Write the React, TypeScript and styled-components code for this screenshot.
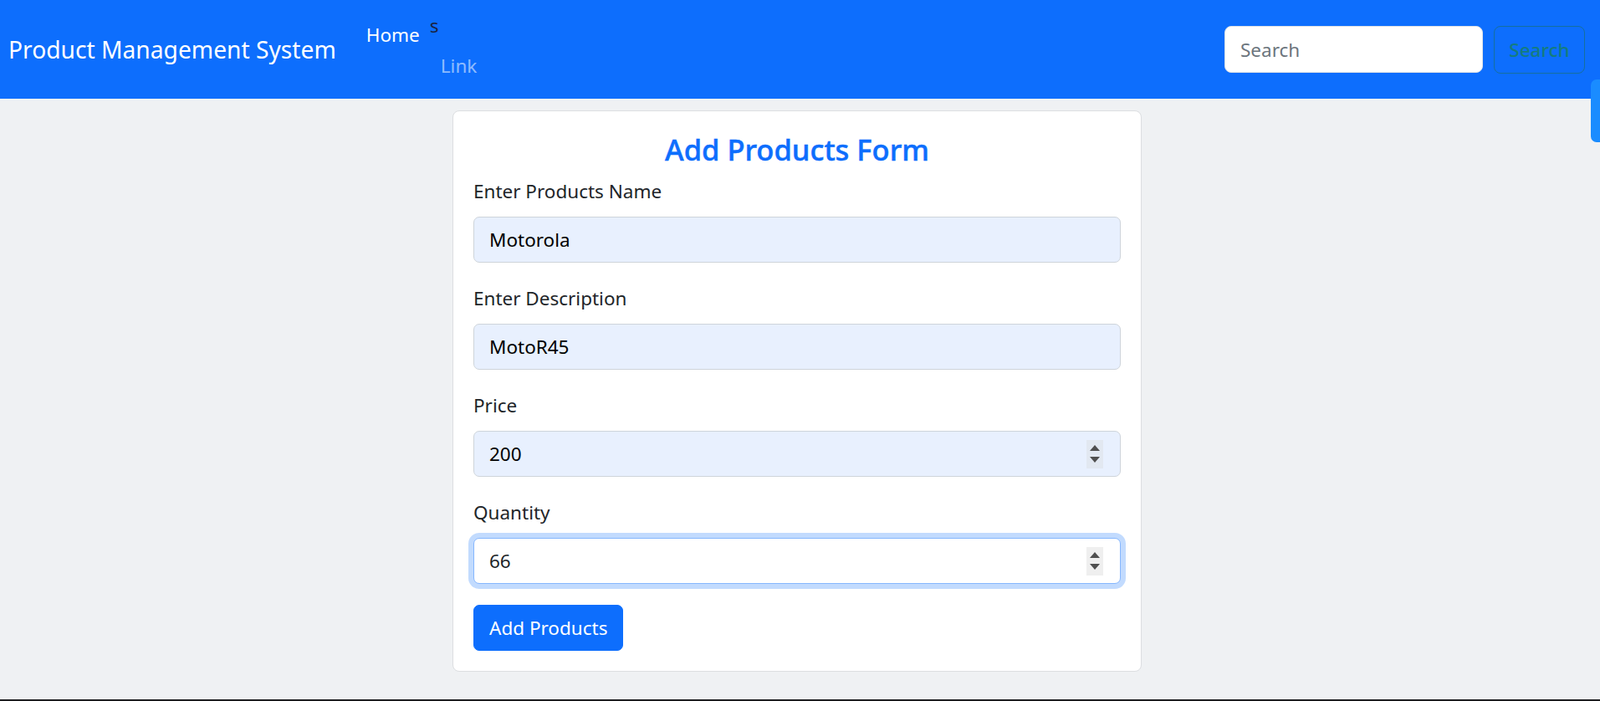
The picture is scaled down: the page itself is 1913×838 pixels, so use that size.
import React from "react";
import styled, { createGlobalStyle } from "styled-components";

const GlobalStyle = createGlobalStyle`
  html, body {
    margin: 0;
    padding: 0;
    background: #eff1f3;
    font-family: "Noto Sans", "Open Sans", sans-serif;
    color: #212529;
  }
  * { box-sizing: border-box; }
`;

const Page = styled.div`
  min-height: 838px;
  display: flex;
  flex-direction: column;
`;

const Navbar = styled.nav`
  height: 118px;
  background: #0d6efd;
  display: flex;
  align-items: center;
  padding: 0 18px 0 10px;
`;

const Brand = styled.a`
  font-size: 28.2px;
  line-height: 40px;
  color: #fff;
  text-decoration: none;
  margin-right: 36px;
  white-space: nowrap;
`;

const NavList = styled.ul`
  list-style: none;
  margin: 0;
  padding: 4px 0 0;
  display: flex;
  flex-direction: column;
`;

const NavRow = styled.li<{ $indent?: number }>`
  display: flex;
  align-items: flex-start;
  padding-left: ${(p) => p.$indent ?? 0}px;
  height: 37px;
`;

const NavLink = styled.a<{ $muted?: boolean }>`
  font-size: 22.5px;
  line-height: 36px;
  color: ${(p) => (p.$muted ? "rgba(255,255,255,0.55)" : "#fff")};
  text-decoration: none;
`;

const Stray = styled.span`
  font-size: 22.5px;
  line-height: 36px;
  color: #1a2340;
  margin-left: 12px;
  transform: translateY(-11px);
`;

const Spacer = styled.div`
  flex: 1;
`;

const SearchForm = styled.form`
  display: flex;
  align-items: center;
  gap: 13px;
`;

const SearchInput = styled.input`
  width: 309px;
  height: 56px;
  padding: 0 18px;
  border: 1px solid #dee2e6;
  border-radius: 8px;
  background: #fff;
  font-family: inherit;
  font-size: 22.5px;
  color: #212529;
  outline: none;
  &::placeholder { color: #6c757d; }
`;

const SearchButton = styled.button`
  width: 109px;
  height: 57px;
  padding: 0;
  border: 1px solid #156f9e;
  border-radius: 8px;
  background: transparent;
  font-family: inherit;
  font-size: 22.5px;
  font-weight: 500;
  color: #147c7e;
  cursor: pointer;
`;

const SideTab = styled.div`
  position: fixed;
  right: 0;
  top: 95px;
  width: 11px;
  height: 75px;
  background: #1a8cff;
  border-radius: 7px 0 0 7px;
`;

const BottomStrip = styled.div`
  position: fixed;
  left: 0;
  right: 0;
  bottom: 0;
  height: 2px;
  background: #1d1d1f;
`;

const Main = styled.main`
  display: flex;
  justify-content: center;
  padding: 14px 7px 0 0;
`;

const Card = styled.section`
  width: 824px;
  background: #fff;
  border: 1px solid #dcdee1;
  border-radius: 8px;
  padding: 24px;
`;

const Title = styled.h4`
  margin: 0 0 11px;
  font-size: 34.5px;
  font-weight: 500;
  line-height: 43px;
  text-align: center;
  color: #0d6efd;
  -webkit-text-stroke: 0.5px #0d6efd;
`;

const Field = styled.div`
  margin-bottom: 25px;
`;

const Label = styled.label`
  display: block;
  font-size: 22.5px;
  line-height: 36px;
  margin-bottom: 12px;
  color: #212529;
`;

const InputWrap = styled.div`
  position: relative;
`;

const Input = styled.input<{ $autofill?: boolean; $focused?: boolean }>`
  display: block;
  width: 100%;
  height: 55px;
  padding: 0 18px;
  font-family: inherit;
  font-size: 22.5px;
  color: ${(p) => (p.$autofill ? "#000" : "#212529")};
  background: ${(p) => (p.$autofill ? "#e8f0fe" : "#fff")};
  border: 1px solid ${(p) => (p.$focused ? "#86b7fe" : "#ced4da")};
  border-radius: 7px;
  outline: none;
  box-shadow: ${(p) => (p.$focused ? "0 0 0 6px rgba(13,110,253,0.25)" : "none")};
  -moz-appearance: textfield;
  &::-webkit-inner-spin-button,
  &::-webkit-outer-spin-button {
    -webkit-appearance: none;
    margin: 0;
  }
`;

const Spinner = styled.span<{ $tint?: string }>`
  position: absolute;
  right: 21px;
  top: 50%;
  transform: translateY(-50%);
  width: 20px;
  height: 34px;
  background: ${(p) => p.$tint ?? "#efefef"};
  display: flex;
  flex-direction: column;
  align-items: center;
  justify-content: center;
  gap: 7px;
  pointer-events: none;
`;

const SubmitButton = styled.button`
  height: 55px;
  padding: 0 18px;
  border: 1px solid #0d6efd;
  border-radius: 7px;
  background: #0d6efd;
  color: #fff;
  font-family: inherit;
  font-size: 22.5px;
  cursor: pointer;
`;

const Arrow = ({ up }: { up?: boolean }) => (
  <svg width="12" height="7" viewBox="0 0 12 7">
    <path d={up ? "M0 7 L6 0 L12 7 Z" : "M0 0 L6 7 L12 0 Z"} fill="#4f4f4f" />
  </svg>
);

const Spin = ({ tint }: { tint?: string }) => (
  <Spinner $tint={tint}>
    <Arrow up />
    <Arrow />
  </Spinner>
);

export default function App() {
  return (
    <Page>
      <GlobalStyle />
      <Navbar>
        <Brand href="#">Product Management System</Brand>
        <NavList>
          <NavRow>
            <NavLink href="#">Home</NavLink>
            <Stray>s</Stray>
          </NavRow>
          <NavRow $indent={89}>
            <NavLink href="#" $muted>
              Link
            </NavLink>
          </NavRow>
        </NavList>
        <Spacer />
        <SearchForm onSubmit={(e) => e.preventDefault()}>
          <SearchInput type="search" placeholder="Search" aria-label="Search" />
          <SearchButton type="submit">Search</SearchButton>
        </SearchForm>
      </Navbar>
      <Main>
        <Card>
          <Title>Add Products Form</Title>
          <Field>
            <Label htmlFor="name">Enter Products Name</Label>
            <Input id="name" $autofill defaultValue="Motorola" />
          </Field>
          <Field>
            <Label htmlFor="desc">Enter Description</Label>
            <Input id="desc" $autofill defaultValue="MotoR45" />
          </Field>
          <Field>
            <Label htmlFor="price">Price</Label>
            <InputWrap>
              <Input id="price" type="number" $autofill defaultValue="200" />
              <Spin tint="#e2e8f1" />
            </InputWrap>
          </Field>
          <Field>
            <Label htmlFor="qty">Quantity</Label>
            <InputWrap>
              <Input id="qty" type="number" $focused defaultValue="66" />
              <Spin />
            </InputWrap>
          </Field>
          <SubmitButton type="submit">Add Products</SubmitButton>
        </Card>
      </Main>
      <SideTab />
      <BottomStrip />
    </Page>
  );
}
